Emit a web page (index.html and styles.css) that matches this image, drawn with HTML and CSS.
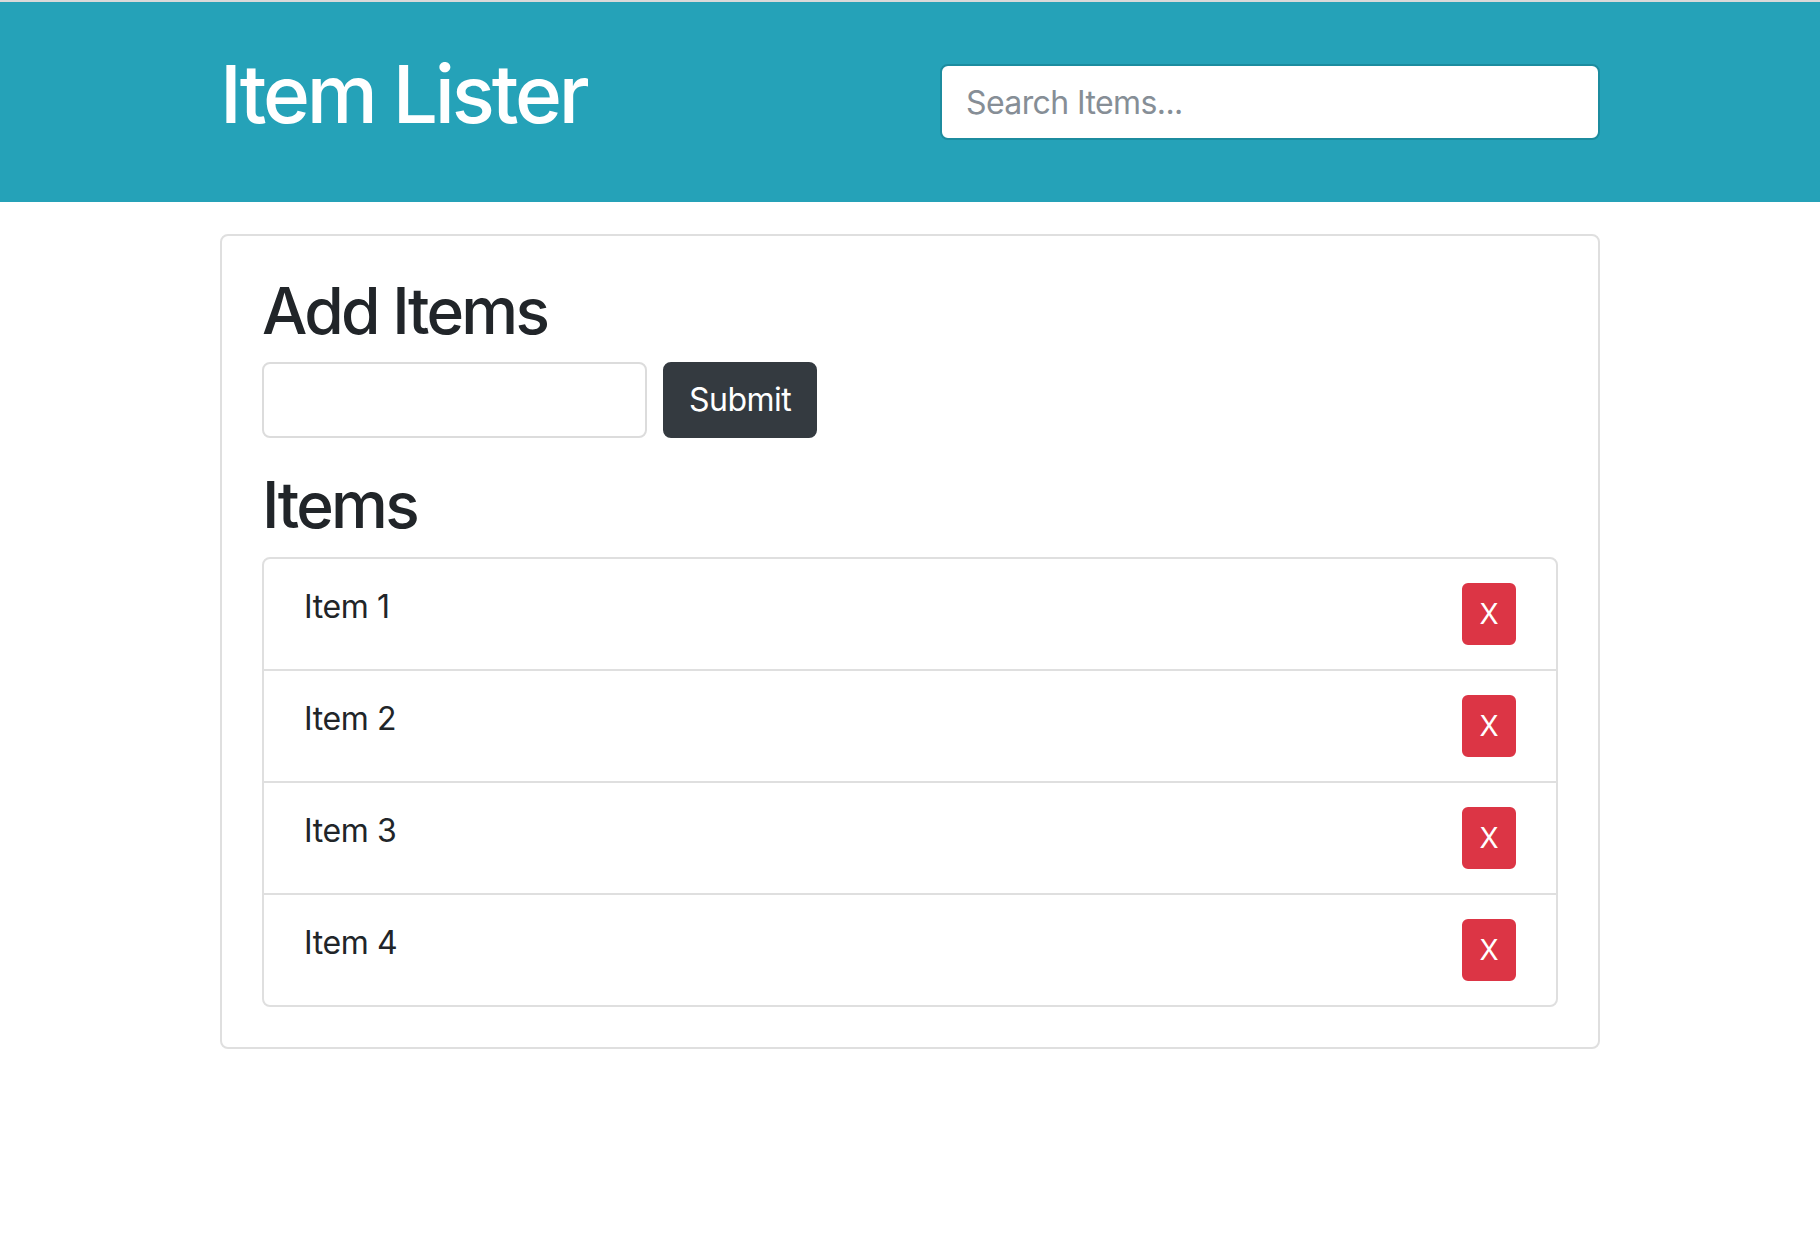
FILE: index.html
```html
<!DOCTYPE html>
<html lang="en">
<head>
<meta charset="utf-8">
<title>Item Lister</title>
<link rel="stylesheet" href="styles.css">
</head>
<body>
  <header class="main-header">
    <div class="container header-row">
      <h1 class="header-title">Item Lister</h1>
      <div class="filter-col">
        <input type="text" class="form-control filter" placeholder="Search Items...">
      </div>
    </div>
  </header>
  <div class="container">
    <div class="card">
      <h2 class="title">Add Items</h2>
      <form class="add-form">
        <input type="text" class="form-control add-input">
        <button type="button" class="btn btn-dark">Submit</button>
      </form>
      <h2 class="title">Items</h2>
      <ul class="list-group">
        <li class="list-group-item"><span>Item 1</span><button class="btn-delete">X</button></li>
        <li class="list-group-item"><span>Item 2</span><button class="btn-delete">X</button></li>
        <li class="list-group-item"><span>Item 3</span><button class="btn-delete">X</button></li>
        <li class="list-group-item"><span>Item 4</span><button class="btn-delete">X</button></li>
      </ul>
    </div>
  </div>
</body>
</html>
```
FILE: styles.css
```css
* { box-sizing: border-box; }

html, body {
  margin: 0;
  padding: 0;
  background: #fff;
}

body {
  font-family: Inter, "Liberation Sans", Arial, sans-serif;
  font-size: 32px;
  line-height: 1.5;
  color: #212529;
  letter-spacing: -0.4px;
}

.container {
  width: 1440px;
  margin: 0 auto;
  padding: 0 30px;
}

.main-header {
  background: #25a2b8;
  border-top: 2px solid #d9d9d9;
  padding: 48px 0;
  margin-bottom: 32px;
  color: #fff;
}

.header-row {
  display: grid;
  grid-template-columns: 1fr 1fr;
  column-gap: 60px;
}

.header-title {
  margin: 0 0 16px;
  font-size: 80px;
  font-weight: 500;
  line-height: 1.1;
  letter-spacing: -3.2px;
}

.filter-col {
  align-self: center;
}

.form-control {
  display: block;
  height: 76px;
  padding: 12px 24px;
  font-family: inherit;
  font-size: 32px;
  line-height: 1.5;
  letter-spacing: -0.6px;
  color: #495057;
  background: #fff;
  border: 2px solid #ced4da;
  border-radius: 8px;
  outline: none;
}

.form-control::placeholder {
  color: #868e96;
  opacity: 1;
}

.filter {
  width: 100%;
  border-color: #1c8c9f;
}

.card {
  border: 2px solid #dfdfdf;
  border-radius: 8px;
  padding: 40px;
}

.title {
  margin: 0 0 16px;
  font-size: 64px;
  font-weight: 500;
  line-height: 1.1;
  letter-spacing: -2.7px;
}

.add-form {
  display: flex;
  align-items: center;
  gap: 16px;
  margin: 0 0 32px;
}

.add-input {
  width: 385px;
  border-color: #dcdcdc;
}

.btn {
  font-family: inherit;
  font-size: 32px;
  line-height: 1.5;
  letter-spacing: -0.5px;
  height: 76px;
  padding: 12px 24px;
  border-radius: 8px;
  border: 2px solid transparent;
  cursor: pointer;
}

.btn-dark {
  background: #343a40;
  border-color: #343a40;
  color: #fff;
  width: 154px;
}

.list-group {
  list-style: none;
  margin: 0;
  padding: 0;
  border: 2px solid #dfdfdf;
  border-radius: 8px;
}

.list-group-item {
  display: flex;
  justify-content: space-between;
  align-items: flex-start;
  padding: 24px 40px;
  border-top: 2px solid #dfdfdf;
}

.list-group-item:first-child {
  border-top: none;
}

.btn-delete {
  width: 54px;
  height: 62px;
  padding: 8px 0;
  font-family: inherit;
  font-size: 28px;
  line-height: 1.5;
  letter-spacing: 0;
  color: #fff;
  background: #dc3545;
  border: 2px solid #dc3545;
  border-radius: 6px;
  cursor: pointer;
}
```
